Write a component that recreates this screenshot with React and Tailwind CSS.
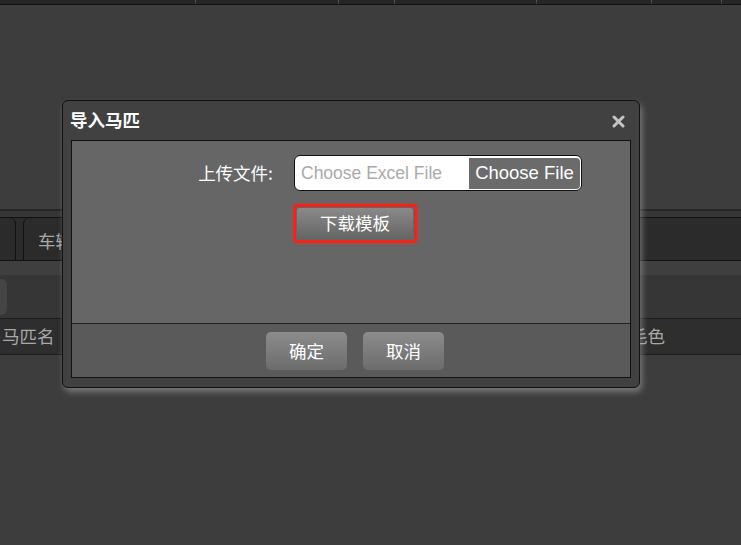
export default function App() {
  const cjk = { fontFamily: '"Noto Sans CJK SC", "Liberation Sans", sans-serif' };
  const lat = { fontFamily: '"Liberation Sans", sans-serif' };
  return (
    <div className="relative w-[741px] h-[545px] overflow-hidden bg-[#3d3d3d]" style={cjk}>
      {/* top bar */}
      <div className="h-[5px] bg-[#262626] border-b border-[#111] flex">
        {[196, 143, 56, 142, 115, 70].map((w, i) => (
          <div key={i} className="h-full border-r border-dotted border-[#555]" style={{ width: w }} />
        ))}
      </div>
      <div className="h-[204px]" />
      <div className="h-[9px] border-t-2 border-[#262626] bg-[#363636] border-b border-b-[#111]" />
      {/* tabs */}
      <div className="h-[43px] bg-[#2b2b2b] border-b border-[#111] flex">
        <div className="w-[16px] h-full border-r border-[#111] rounded-tr-[6px]" />
        <div className="w-[7px]" />
        <div className="w-[200px] h-full border-l border-[#111] rounded-tl-[6px] pl-[14px] pt-[10px] text-[17.5px] text-[#a8a8a8]">车辆管理</div>
      </div>
      <div className="h-[14px] bg-[#3f3f3f]" />
      <div className="h-[43px] bg-[#363636] flex items-center">
        <div className="w-[7px] h-[36px] bg-[#454545] rounded-r-[6px]" />
      </div>
      <div className="h-[37px] bg-[#2e2e2e] border-y border-[#1c1c1c] relative text-[17.5px] text-[#a8a8a8]">
        <span className="absolute left-[2px] top-[4px]">马匹名</span>
        <span className="absolute left-[630px] top-[4px]">毛色</span>
      </div>

      {/* dialog */}
      <div className="absolute left-[62px] top-[100px] w-[578px] h-[288px] rounded-[6px] border border-[#111] bg-[#414141] shadow-[2px_4px_6px_rgba(170,170,170,0.55)] flex flex-col">
        <div className="h-[39px] flex items-center justify-between pl-[7px] pr-[14px]">
          <span className="text-[17.5px] font-bold text-white leading-none -mt-[1px]">导入马匹</span>
          <svg width="13" height="13" viewBox="0 0 13 13" className="mt-[1px]">
            <path d="M2 2 L11 11 M11 2 L2 11" stroke="#c4c4c4" strokeWidth="3" strokeLinecap="round" />
          </svg>
        </div>
        <div className="mx-[8px] mb-[9px] flex-1 border border-[#111] flex flex-col">
          <div className="h-[182px] bg-[#666] pt-[14px]">
            <div className="flex items-center">
              <div className="w-[201px] text-right text-[17.5px] text-white">上传文件:</div>
              <div className="ml-[21px] w-[288px] h-[36px] rounded-[6px] border border-[#111] bg-white flex items-center pr-[1px]">
                <span className="flex-1 pl-[6px] text-[17.5px] text-[#aaa]" style={lat}>Choose Excel File</span>
                <span className="w-[111px] h-[31px] bg-[#6b6b6b] flex items-center justify-center text-[18.5px] text-white rounded-r-[4px]" style={lat}>Choose File</span>
              </div>
            </div>
            <div className="mt-[13px] ml-[221px] w-[124px] h-[39px] rounded-[4px] border-[3px] border-[#f0241a] shadow-[0_0_3px_rgba(255,40,20,0.8)] flex">
              <div className="flex-1 m-[1px] rounded-[3px] bg-gradient-to-b from-[#8a8a8a] to-[#656565] flex items-center justify-center text-[17.5px] text-white">下载模板</div>
            </div>
          </div>
          <div className="flex-1 border-t border-[#222] bg-[#5a5a5a] flex justify-center items-start pt-[8px] pl-[8px] gap-[16px]">
            <div className="w-[81px] h-[38px] rounded-[5px] bg-gradient-to-b from-[#8c8c8c] to-[#6c6c6c] flex items-center justify-center text-[17.5px] text-white">确定</div>
            <div className="w-[81px] h-[38px] rounded-[5px] bg-gradient-to-b from-[#8c8c8c] to-[#6c6c6c] flex items-center justify-center text-[17.5px] text-white">取消</div>
          </div>
        </div>
      </div>
    </div>
  );
}
